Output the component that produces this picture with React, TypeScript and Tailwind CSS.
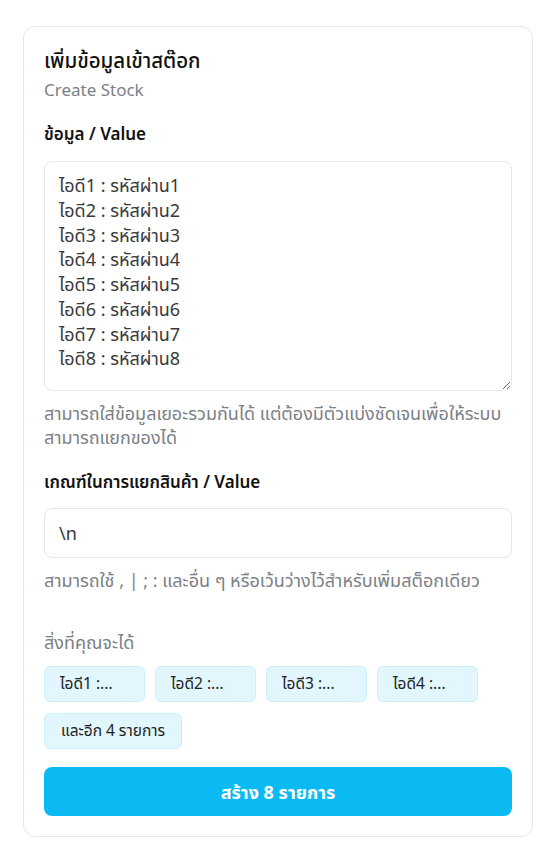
import React from "react";

const items = Array.from({ length: 8 }, (_, i) => `ไอดี${i + 1} : รหัสผ่าน${i + 1}`);

export default function App() {
  const value = items.join("\n");
  return (
    <div className="min-h-screen bg-white pl-[23px] pr-[25px] pt-[26px] pb-[27px] font-['Noto_Sans','Noto_Sans_Thai',sans-serif] text-[#111827]">
      <div className="rounded-xl border border-[#e5e7eb] bg-white px-5 pt-[19px] pb-5">
        <h2 className="text-[20.5px] leading-7 font-medium text-[#111]">เพิ่มข้อมูลเข้าสต๊อก</h2>
        <p className="mt-1 text-[17px] leading-6 text-[#7b7f87]">Create Stock</p>

        <label className="mt-5 block text-[17px] leading-6 font-semibold text-[#111]">ข้อมูล / Value</label>
        <textarea
          className="mt-[15px] block h-[230px] w-full resize-y rounded-lg border border-[#e5e7eb] px-[14px] py-[11px] text-lg leading-[24.75px] text-[#3a3a3a] outline-none"
          defaultValue={value}
        />
        <p className="mt-[10px] text-lg leading-6 text-[#7b7f87]">
          สามารถใส่ข้อมูลเยอะรวมกันได้ แต่ต้องมีตัวแบ่งชัดเจนเพื่อให้ระบบ
          <br />
          สามารถแยกของได้
        </p>

        <label className="mt-[21px] block text-[17px] leading-6 font-semibold text-[#111]">
          เกณฑ์ในการแยกสินค้า / Value
        </label>
        <input
          className="mt-[14px] block h-[50px] w-full rounded-lg border border-[#e5e7eb] px-[14px] text-lg text-[#3a3a3a] outline-none"
          defaultValue="\n"
        />
        <p className="mt-[10px] text-lg leading-6 text-[#7b7f87]">
          สามารถใช้ , | ; : และอื่น ๆ หรือเว้นว่างไว้สำหรับเพิ่มสต็อกเดียว
        </p>

        <p className="mt-[38px] text-lg leading-6 text-[#7b7f87]">สิ่งที่คุณจะได้</p>
        <div className="mt-[12px] flex flex-wrap gap-x-[10px] gap-y-[11px]">
          {items.slice(0, 4).map((it, i) => (
            <span
              key={i}
              className="flex h-9 w-[101px] items-center rounded-md border border-[#cdeffb] bg-[#e2f6fd] px-[15px] text-[15.5px] text-[#222]"
            >
              ไอดี{i + 1} :...
            </span>
          ))}
          <span className="flex h-9 items-center rounded-md border border-[#cdeffb] bg-[#e2f6fd] px-4 text-[15.5px] text-[#222]">
            และอีก 4 รายการ
          </span>
        </div>

        <button className="mt-[18px] flex h-[49px] w-full items-center justify-center rounded-lg bg-[#0cbaf3] text-lg font-bold text-white">
          สร้าง 8 รายการ
        </button>
      </div>
    </div>
  );
}
